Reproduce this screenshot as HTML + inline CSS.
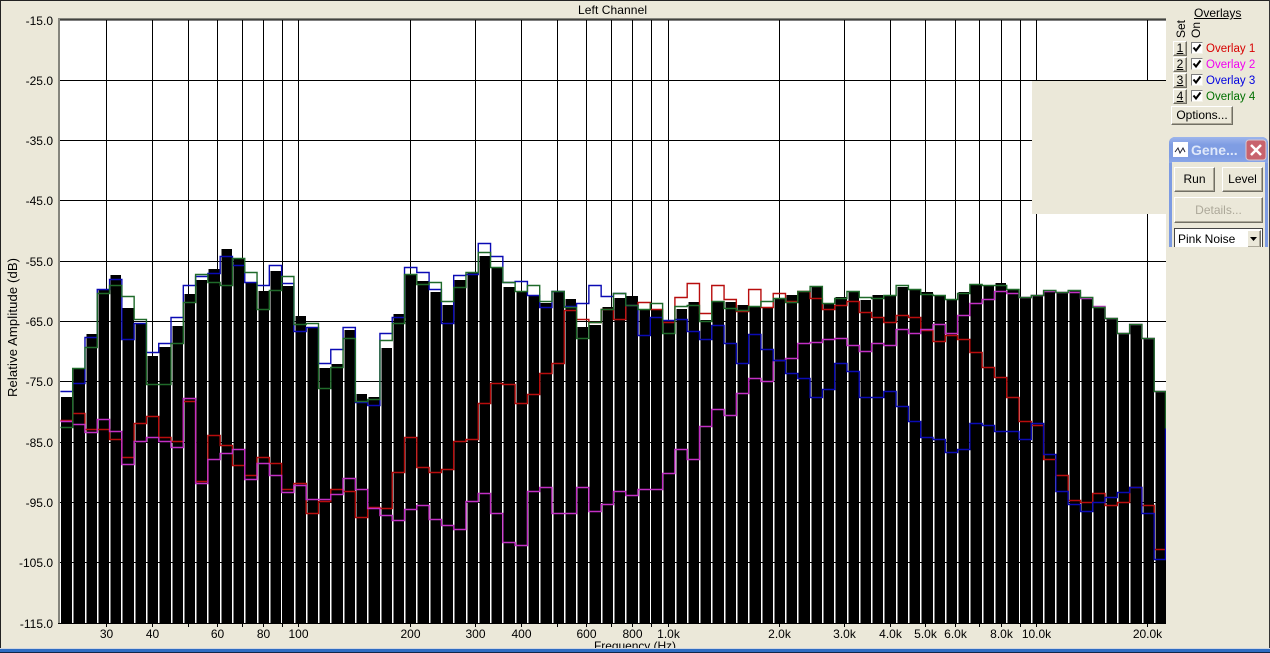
<!DOCTYPE html>
<html><head><meta charset="utf-8"><style>
html,body{margin:0;padding:0;width:1270px;height:653px;overflow:hidden;background:#ebe8d9;font-family:"Liberation Sans",Arial,sans-serif;font-size:12px;color:#000}
svg{position:absolute;left:0;top:0}
.a{position:absolute;white-space:nowrap}
.btn{position:absolute;box-sizing:border-box;background:#ebe8d9;border:1px solid;border-color:#fff #716f64 #716f64 #fff;box-shadow:inset -1px -1px 0 #aca899;text-align:center;font-size:12px}
.ck{position:absolute;box-sizing:border-box;left:1191px;width:12px;height:12px;background:#fff;border:1px solid;border-color:#808080 #f4f2e8 #f4f2e8 #808080}
.ov{font-size:11.5px}
</style></head><body>
<svg width="1270" height="653" viewBox="0 0 1270 653" font-family="'Liberation Sans',Arial,sans-serif" font-size="12">
<rect x="60" y="20" width="1106" height="603" fill="#fff"/>
<path fill="#000" d="M61 623V397h12.29V368h12.29V334h12.29V290h12.29V275h12.29V308h12.29V324h12.29V356h12.29V347h12.29V326h12.29V294h12.29V280h12.29V269h12.29V249h12.29V258h12.29V283h12.29V291h12.29V271h12.29V286h12.29V316h12.29V327h12.29V368h12.29V364h12.29V330h12.29V394h12.29V397h12.29V348h12.29V314h12.29V274h12.29V281h12.29V292h12.29V305h12.29V280h12.29V273h12.29V256h12.29V267h12.29V287h12.29V292h12.29V295h12.29V303h12.29V292h12.29V299h12.29V327h12.29V325h12.29V307h12.29V298h12.29V296h12.29V310h12.29V310h12.29V323h12.29V309h12.29V302h12.29V320h12.29V302h12.29V302h12.29V305h12.29V306h12.29V308h12.29V299h12.29V295h12.29V291h12.29V287h12.29V304h12.29V297h12.29V291h12.29V300h12.29V295h12.29V296h12.29V287h12.29V289h12.29V292h12.29V296h12.29V300h12.29V292h12.29V284h12.29V285h12.29V283h12.29V289h12.29V297h12.29V295h12.29V290h12.29V292h12.29V290h12.29V297h12.29V307h12.29V319h12.29V334h12.29V325h12.29V339h12.29V391H1166V623Z"/>
<path stroke="#fff" stroke-width="1.5" fill="none" d="M72.75 20V623M85.75 20V623M97.75 20V623M109.75 20V623M121.75 20V623M134.75 20V623M146.75 20V623M158.75 20V623M171.75 20V623M183.75 20V623M195.75 20V623M207.75 20V623M220.75 20V623M232.75 20V623M244.75 20V623M257.75 20V623M269.75 20V623M281.75 20V623M294.75 20V623M306.75 20V623M318.75 20V623M330.75 20V623M343.75 20V623M355.75 20V623M367.75 20V623M380.75 20V623M392.75 20V623M404.75 20V623M416.75 20V623M429.75 20V623M441.75 20V623M453.75 20V623M466.75 20V623M478.75 20V623M490.75 20V623M502.75 20V623M515.75 20V623M527.75 20V623M539.75 20V623M552.75 20V623M564.75 20V623M576.75 20V623M588.75 20V623M601.75 20V623M613.75 20V623M625.75 20V623M638.75 20V623M650.75 20V623M662.75 20V623M675.75 20V623M687.75 20V623M699.75 20V623M711.75 20V623M724.75 20V623M736.75 20V623M748.75 20V623M761.75 20V623M773.75 20V623M785.75 20V623M797.75 20V623M810.75 20V623M822.75 20V623M834.75 20V623M847.75 20V623M859.75 20V623M871.75 20V623M883.75 20V623M896.75 20V623M908.75 20V623M920.75 20V623M933.75 20V623M945.75 20V623M957.75 20V623M969.75 20V623M982.75 20V623M994.75 20V623M1006.75 20V623M1019.75 20V623M1031.75 20V623M1043.75 20V623M1055.75 20V623M1068.75 20V623M1080.75 20V623M1092.75 20V623M1105.75 20V623M1117.75 20V623M1129.75 20V623M1142.75 20V623M1154.75 20V623"/>
<path stroke="#000" stroke-width="1" fill="none" d="M58 80.5H1166M58 140.5H1166M58 200.5H1166M58 261.5H1166M58 321.5H1166M58 381.5H1166M58 442.5H1166M58 502.5H1166M58 562.5H1166M58 623.5H1166M106.5 20V627M152.5 20V627M188.5 20V627M217.5 20V627M242.5 20V627M263.5 20V627M282.5 20V627M298.5 20V627M410.5 20V627M475.5 20V627M521.5 20V627M557.5 20V627M586.5 20V627M611.5 20V627M632.5 20V627M651.5 20V627M668.5 20V627M779.5 20V627M844.5 20V627M890.5 20V627M925.5 20V627M955.5 20V627M979.5 20V627M1001.5 20V627M1020.5 20V627M1036.5 20V627M1147.5 20V627"/>
<g fill="none" stroke-width="1.4" transform="translate(0 .5)">
<path stroke="#b80d0d" d="M60.4 420h12.29V413h12.29V429h12.29V429h12.29V439h12.29V457h12.29V423h12.29V416h12.29V437h12.29V441h12.29V401h12.29V481h12.29V435h12.29V445h12.29V465h12.29V475h12.29V457h12.29V463h12.29V489h12.29V483h12.29V513h12.29V501h12.29V489h12.29V491h12.29V517h12.29V507h12.29V508h12.29V472h12.29V437h12.29V467h12.29V472h12.29V469h12.29V441h12.29V439h12.29V403h12.29V383h12.29V384h12.29V403h12.29V394h12.29V373h12.29V363h12.29V310h12.29V319h12.29V322h12.29V309h12.29V319h12.29V305h12.29V302h12.29V309h12.29V322h12.29V297h12.29V283h12.29V313h12.29V285h12.29V299h12.29V311h12.29V289h12.29V307h12.29V293h12.29V301h12.29V291h12.29V298h12.29V309h12.29V305h12.29V301h12.29V312h12.29V317h12.29V322h12.29V315h12.29V317h12.29V330h12.29V341h12.29V335h12.29V339h12.29V352h12.29V367h12.29V377h12.29V397h12.29V421h12.29V425h12.29V459h12.29V475h12.29V500h12.29V502h12.29V493h12.29V505h12.29V502h12.29V487h12.29V505h12.29V549H1166"/>
<path stroke="#c22fc4" d="M60.4 421h12.29V424h12.29V432h12.29V419h12.29V431h12.29V464h12.29V441h12.29V437h12.29V441h12.29V447h12.29V398h12.29V483h12.29V459h12.29V453h12.29V449h12.29V479h12.29V463h12.29V475h12.29V492h12.29V485h12.29V499h12.29V499h12.29V494h12.29V478h12.29V489h12.29V508h12.29V515h12.29V520h12.29V509h12.29V505h12.29V519h12.29V525h12.29V529h12.29V501h12.29V493h12.29V513h12.29V542h12.29V545h12.29V491h12.29V487h12.29V513h12.29V513h12.29V487h12.29V511h12.29V504h12.29V491h12.29V495h12.29V489h12.29V489h12.29V473h12.29V449h12.29V459h12.29V426h12.29V409h12.29V415h12.29V393h12.29V378h12.29V381h12.29V360h12.29V358h12.29V343h12.29V342h12.29V339h12.29V338h12.29V345h12.29V351h12.29V343h12.29V345h12.29V329h12.29V333h12.29V329h12.29V324h12.29V333h12.29V315h12.29V303h12.29V299h12.29V291h12.29V293h12.29V297h12.29V295h12.29V291h12.29V292h12.29V292h12.29V298h12.29V306h12.29V318h12.29V333h12.29V324h12.29V338h12.29V391H1166"/>
<path stroke="#0a0ab4" d="M60.4 391h12.29V383h12.29V337h12.29V289h12.29V279h12.29V339h12.29V323h12.29V352h12.29V343h12.29V317h12.29V285h12.29V276h12.29V273h12.29V256h12.29V265h12.29V282h12.29V285h12.29V265h12.29V283h12.29V331h12.29V327h12.29V363h12.29V349h12.29V327h12.29V402h12.29V405h12.29V333h12.29V317h12.29V267h12.29V272h12.29V289h12.29V323h12.29V275h12.29V274h12.29V243h12.29V256h12.29V282h12.29V281h12.29V295h12.29V307h12.29V291h12.29V306h12.29V303h12.29V285h12.29V296h12.29V293h12.29V305h12.29V335h12.29V317h12.29V320h12.29V319h12.29V331h12.29V339h12.29V325h12.29V343h12.29V363h12.29V334h12.29V349h12.29V360h12.29V373h12.29V378h12.29V397h12.29V389h12.29V363h12.29V371h12.29V397h12.29V397h12.29V391h12.29V406h12.29V421h12.29V437h12.29V439h12.29V452h12.29V449h12.29V423h12.29V425h12.29V431h12.29V431h12.29V439h12.29V423h12.29V454h12.29V491h12.29V504h12.29V511h12.29V502h12.29V497h12.29V492h12.29V487h12.29V513h12.29V559H1165.5V428"/>
<path stroke="#1f6a2a" d="M60.4 427h12.29V368h12.29V347h12.29V293h12.29V285h12.29V296h12.29V319h12.29V384h12.29V384h12.29V343h12.29V302h12.29V274h12.29V282h12.29V285h12.29V258h12.29V272h12.29V309h12.29V290h12.29V276h12.29V324h12.29V323h12.29V388h12.29V367h12.29V338h12.29V401h12.29V399h12.29V340h12.29V323h12.29V274h12.29V284h12.29V282h12.29V301h12.29V287h12.29V272h12.29V252h12.29V267h12.29V282h12.29V291h12.29V285h12.29V301h12.29V291h12.29V307h12.29V338h12.29V322h12.29V309h12.29V293h12.29V305h12.29V309h12.29V303h12.29V333h12.29V306h12.29V305h12.29V321h12.29V301h12.29V308h12.29V310h12.29V306h12.29V301h12.29V298h12.29V302h12.29V291h12.29V286h12.29V303h12.29V298h12.29V291h12.29V297h12.29V298h12.29V295h12.29V285h12.29V289h12.29V294h12.29V295h12.29V299h12.29V293h12.29V284h12.29V285h12.29V285h12.29V289h12.29V297h12.29V295h12.29V290h12.29V292h12.29V290h12.29V297h12.29V307h12.29V318h12.29V333h12.29V324h12.29V338h12.29V391H1165.5V428"/>
</g>
<rect x="58" y="18" width="1108" height="1.5" fill="#85857d"/>
<rect x="58" y="19.5" width="1108" height="1" fill="#000"/>
<rect x="58" y="18" width="2" height="605" fill="#85857d"/>
<rect x="1166" y="0" width="104" height="653" fill="#ebe8d9"/>
<rect x="1032" y="81" width="135" height="133" fill="#ebe8d9"/>
<rect x="0" y="0" width="1270" height="1" fill="#222"/>
<rect x="0" y="0" width="1" height="650" fill="#222"/>
<rect x="1269" y="0" width="1" height="650" fill="#333"/>
<g text-anchor="end">
<text x="53" y="25">-15.0</text><text x="53" y="85">-25.0</text><text x="53" y="145">-35.0</text><text x="53" y="205">-45.0</text><text x="53" y="266">-55.0</text><text x="53" y="326">-65.0</text><text x="53" y="386">-75.0</text><text x="53" y="447">-85.0</text><text x="53" y="507">-95.0</text><text x="53" y="567">-105.0</text><text x="53" y="628">-115.0</text>
</g>
<g text-anchor="middle">
<text x="106.5" y="638">30</text><text x="152.5" y="638">40</text><text x="217.5" y="638">60</text><text x="263.5" y="638">80</text><text x="298.5" y="638">100</text><text x="410.5" y="638">200</text><text x="475.5" y="638">300</text><text x="521.5" y="638">400</text><text x="586.5" y="638">600</text><text x="632.5" y="638">800</text><text x="668.5" y="638">1.0k</text><text x="779.5" y="638">2.0k</text><text x="844.5" y="638">3.0k</text><text x="890.5" y="638">4.0k</text><text x="925.5" y="638">5.0k</text><text x="955.5" y="638">6.0k</text><text x="1001.5" y="638">8.0k</text><text x="1036.5" y="638">10.0k</text><text x="1147.5" y="638">20.0k</text>
</g>
<text x="578" y="14" textLength="69">Left Channel</text>
<text x="594" y="650" textLength="82">Frequency (Hz)</text>
<text transform="translate(17 397) rotate(-90)" font-size="13" textLength="139">Relative Amplitude (dB)</text>
<rect x="0" y="648" width="1270" height="1" fill="#cfd6e0"/>
<rect x="0" y="649" width="1270" height="3" fill="#2f6cc2"/>
<rect x="0" y="652" width="1270" height="1" fill="#10264a"/>
<text transform="translate(1185 38) rotate(-90)">Set</text>
<text transform="translate(1200 38) rotate(-90)">On</text>
</svg>

<div class="a" style="left:1194px;top:6px;text-decoration:underline">Overlays</div>
<div class="btn" style="left:1173px;top:41px;width:14px;height:15px;line-height:13px;text-decoration:underline">1</div>
<div class="btn" style="left:1173px;top:57px;width:14px;height:15px;line-height:13px;text-decoration:underline">2</div>
<div class="btn" style="left:1173px;top:73px;width:14px;height:15px;line-height:13px;text-decoration:underline">3</div>
<div class="btn" style="left:1173px;top:89px;width:14px;height:15px;line-height:13px;text-decoration:underline">4</div>
<div class="ck" style="top:42px"></div><div class="ck" style="top:58px"></div><div class="ck" style="top:74px"></div><div class="ck" style="top:90px"></div>
<svg width="1270" height="653" viewBox="0 0 1270 653"><g fill="none" stroke="#000" stroke-width="2"><path d="M1193.5 47.5l2.5 3 4.5-6"/><path d="M1193.5 63.5l2.5 3 4.5-6"/><path d="M1193.5 79.5l2.5 3 4.5-6"/><path d="M1193.5 95.5l2.5 3 4.5-6"/></g></svg>
<div class="a ov" style="left:1206px;top:43px;color:#d80000">Overlay 1</div>
<div class="a ov" style="left:1206px;top:59px;color:#f000f0">Overlay 2</div>
<div class="a ov" style="left:1206px;top:75px;color:#0000e0">Overlay 3</div>
<div class="a ov" style="left:1206px;top:91px;color:#007000">Overlay 4</div>
<div class="btn" style="left:1171px;top:106px;width:62px;height:19px;line-height:17px">Options...</div>

<div class="a" style="left:1169px;top:137px;width:99px;height:110px;background:#7d9be2;border-radius:6px 6px 0 0"></div>
<div class="a" style="left:1169px;top:137px;width:99px;height:26px;background:linear-gradient(#9db5ec,#7f9de3 30%,#7f9de3 75%,#8ba7e8);border-radius:6px 6px 0 0"></div>
<div class="a" style="left:1172px;top:162px;width:93px;height:85px;background:#ebe8d9"></div>
<div class="a" style="left:1173px;top:142px;width:15px;height:15px;background:#fff;border:0"></div>
<svg width="1270" height="653" viewBox="0 0 1270 653"><path d="M1175 152l3-4 2 5 3-5 2 4" fill="none" stroke="#223" stroke-width="1"/><rect x="1246" y="140" width="20" height="20" rx="3" fill="#c8636e" stroke="#d8c8d0"/><path d="M1251 145l10 10M1261 145l-10 10" stroke="#fff" stroke-width="2.5"/></svg>
<div class="a" style="left:1191px;top:142px;font-weight:bold;font-size:14px;color:#dfe8fa">Gene...</div>
<div class="btn" style="left:1174px;top:167px;width:41px;height:25px;line-height:23px">Run</div>
<div class="btn" style="left:1222px;top:167px;width:41px;height:25px;line-height:23px">Level</div>
<div class="btn" style="left:1174px;top:197px;width:89px;height:26px;line-height:24px;color:#aca899">Details...</div>
<div class="a" style="left:1174px;top:228px;width:89px;height:19px;box-sizing:border-box;background:#fff;border:1px solid #444;border-bottom:0;padding-left:3px;line-height:20px">Pink Noise</div>
<div class="btn" style="left:1247px;top:230px;width:14px;height:17px;border-bottom:0"></div>
<svg width="1270" height="653" viewBox="0 0 1270 653"><path d="M1250 237h7l-3.5 4z" fill="#000"/></svg>
</body></html>
